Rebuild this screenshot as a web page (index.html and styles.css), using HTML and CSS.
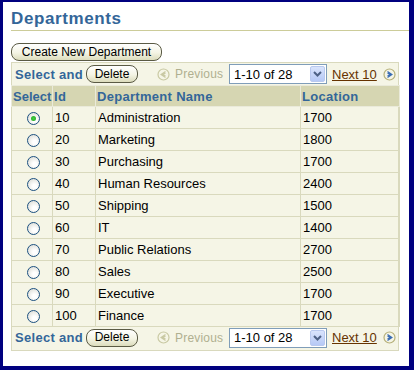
FILE: index.html
```html
<!DOCTYPE html>
<html lang="en">
<head>
  <meta charset="UTF-8" />
  <title>Departments</title>
  <link rel="stylesheet" href="styles.css">
</head>
<body>
  <div class="frame">
    <h1 class="page-title">Departments</h1>
    <div class="title-rule"></div>

    <button class="pill-btn create-btn">Create New Department</button>

    <div class="table-box">
      <div class="toolbar">
        <span class="select-label">Select and</span>
        <button class="pill-btn">Delete</button>
        <span class="nav-prev">
          <svg class="nav-icon" width="13" height="13" viewBox="0 0 13 13">
            <circle cx="6.5" cy="6.5" r="5.5" fill="none" stroke="#c9c9a3" stroke-width="1.2"/>
            <path d="M8.5 3.5 L4 6.5 L8.5 9.5 M8.5 5 L6 6.5 L8.5 8" fill="none" stroke="#c9c9a3" stroke-width="1.1"/>
          </svg>
          <span class="prev-text">Previous</span>
        </span>
        <div class="range-select">
          <span class="range-text">1-10 of 28</span>
          <span class="range-arrow">
            <svg width="9" height="6" viewBox="0 0 9 6"><path d="M1 1 L4.5 4.5 L8 1" fill="none" stroke="#4d6185" stroke-width="2"/></svg>
          </span>
        </div>
        <a class="nav-next" href="#">Next 10</a>
        <svg class="nav-icon" width="13" height="13" viewBox="0 0 13 13">
          <circle cx="6.5" cy="6.5" r="5.5" fill="none" stroke="#b6b07a" stroke-width="1.2"/>
          <path d="M4.5 3.5 L9 6.5 L4.5 9.5 M4.5 5 L7 6.5 L4.5 8" fill="none" stroke="#3b6db3" stroke-width="1.1"/>
        </svg>
      </div>

      <table class="dept-table">
        <thead>
          <tr>
            <th class="col-select">Select</th>
            <th class="col-id">Id</th>
            <th class="col-name">Department Name</th>
            <th class="col-loc">Location</th>
          </tr>
        </thead>
        <tbody>
          <tr><td class="col-select"><span class="radio checked"></span></td><td>10</td><td>Administration</td><td>1700</td></tr>
          <tr><td class="col-select"><span class="radio"></span></td><td>20</td><td>Marketing</td><td>1800</td></tr>
          <tr><td class="col-select"><span class="radio"></span></td><td>30</td><td>Purchasing</td><td>1700</td></tr>
          <tr><td class="col-select"><span class="radio"></span></td><td>40</td><td>Human Resources</td><td>2400</td></tr>
          <tr><td class="col-select"><span class="radio"></span></td><td>50</td><td>Shipping</td><td>1500</td></tr>
          <tr><td class="col-select"><span class="radio"></span></td><td>60</td><td>IT</td><td>1400</td></tr>
          <tr><td class="col-select"><span class="radio"></span></td><td>70</td><td>Public Relations</td><td>2700</td></tr>
          <tr><td class="col-select"><span class="radio"></span></td><td>80</td><td>Sales</td><td>2500</td></tr>
          <tr><td class="col-select"><span class="radio"></span></td><td>90</td><td>Executive</td><td>1700</td></tr>
          <tr><td class="col-select"><span class="radio"></span></td><td>100</td><td>Finance</td><td>1700</td></tr>
        </tbody>
      </table>

      <div class="toolbar toolbar-bottom">
        <span class="select-label">Select and</span>
        <button class="pill-btn">Delete</button>
        <span class="nav-prev">
          <svg class="nav-icon" width="13" height="13" viewBox="0 0 13 13">
            <circle cx="6.5" cy="6.5" r="5.5" fill="none" stroke="#c9c9a3" stroke-width="1.2"/>
            <path d="M8.5 3.5 L4 6.5 L8.5 9.5 M8.5 5 L6 6.5 L8.5 8" fill="none" stroke="#c9c9a3" stroke-width="1.1"/>
          </svg>
          <span class="prev-text">Previous</span>
        </span>
        <div class="range-select">
          <span class="range-text">1-10 of 28</span>
          <span class="range-arrow">
            <svg width="9" height="6" viewBox="0 0 9 6"><path d="M1 1 L4.5 4.5 L8 1" fill="none" stroke="#4d6185" stroke-width="2"/></svg>
          </span>
        </div>
        <a class="nav-next" href="#">Next 10</a>
        <svg class="nav-icon" width="13" height="13" viewBox="0 0 13 13">
          <circle cx="6.5" cy="6.5" r="5.5" fill="none" stroke="#b6b07a" stroke-width="1.2"/>
          <path d="M4.5 3.5 L9 6.5 L4.5 9.5 M4.5 5 L7 6.5 L4.5 8" fill="none" stroke="#3b6db3" stroke-width="1.1"/>
        </svg>
      </div>
    </div>
  </div>
</body>
</html>
```

FILE: styles.css
```css
:root {
  --navy: #00007f;
  --blue: #336699;
  --olive-bg: #f5f5e6;
  --olive-head: #d6d6b2;
  --olive-line: #d9d9bd;
  --brown: #663300;
}

* {
  box-sizing: border-box;
}

body {
  margin: 0;
  font-family: "Liberation Sans", Arial, sans-serif;
  font-size: 13px;
  color: #000;
  background: #fff;
}

.frame {
  width: 414px;
  height: 370px;
  border-style: solid;
  border-color: var(--navy);
  border-width: 2px 5px 4px 3px;
  padding: 7px 0 0 8px;
  background: #fff;
}

.page-title {
  margin: 0;
  font-size: 17px;
  font-weight: bold;
  letter-spacing: 0.6px;
  color: var(--blue);
  line-height: 20px;
}

.title-rule {
  height: 1px;
  background: #cccc99;
  margin: 1px 0 12px;
}

.pill-btn {
  font-family: "Liberation Sans", Arial, sans-serif;
  font-size: 12px;
  color: #000;
  height: 18px;
  padding: 0 7px;
  border: 1px solid #5a5a44;
  border-radius: 8px;
  background: linear-gradient(#ffffff, #f4f4e4 55%, #dcdcbc);
  line-height: 15px;
  cursor: pointer;
}

.create-btn {
  display: block;
  width: 151px;
  margin-bottom: 1px;
}

.table-box {
  width: 388px;
  border: 1px solid var(--olive-line);
  background: var(--olive-bg);
}

.toolbar {
  display: flex;
  align-items: center;
  height: 22px;
  padding-left: 3px;
  white-space: nowrap;
}

.toolbar > * {
  flex-shrink: 0;
}

.toolbar-bottom {
  height: 23px;
  padding-bottom: 2px;
}

.select-label {
  width: 71px;
  font-weight: bold;
  color: var(--blue);
  font-size: 13px;
  letter-spacing: 0.3px;
}

.toolbar .pill-btn {
  width: 52px;
  padding: 0;
}

.nav-prev {
  display: flex;
  align-items: center;
  gap: 5px;
  color: #b0b090;
  margin-left: 19px;
}

.prev-text {
  width: 48px;
  font-size: 12px;
  letter-spacing: 0.2px;
}

.range-select {
  display: flex;
  align-items: center;
  justify-content: space-between;
  width: 98px;
  height: 20px;
  margin-left: 6px;
  border: 1px solid #7f9db9;
  background: #fff;
  padding: 0 1px 0 4px;
}

.range-text {
  font-size: 13px;
}

.range-arrow {
  display: flex;
  align-items: center;
  justify-content: center;
  width: 15px;
  height: 16px;
  border: 1px solid #b9c9ef;
  border-radius: 2px;
  background: linear-gradient(#d9e4fc, #b6c9f6);
}

.nav-next {
  width: 45px;
  color: var(--brown);
  margin-left: 5px;
  margin-right: 6px;
}

.nav-icon {
  display: block;
}

.dept-table {
  width: 388px;
  border-collapse: collapse;
  table-layout: fixed;
  margin-left: -1px;
}

.dept-table th,
.dept-table td {
  height: 22px;
  padding: 0 0 0 2px;
  text-align: left;
  border: 1px solid var(--olive-line);
}

.dept-table th {
  height: 21px;
  padding-left: 1px;
  background: var(--olive-head);
  color: var(--blue);
  font-weight: bold;
  letter-spacing: 0.3px;
  border-color: #eaeada;
}

th.col-select {
  letter-spacing: 0;
}

.col-select {
  width: 41px;
}

.col-id {
  width: 43px;
}

.col-name {
  width: 205px;
}

.col-loc {
  width: 99px;
}

td.col-select {
  text-align: center;
  padding: 0;
}

.radio {
  display: inline-block;
  width: 13px;
  height: 13px;
  border-radius: 50%;
  border: 1px solid #1c5180;
  background: radial-gradient(circle at 60% 65%, #ffffff 20%, #d6d6ce 100%);
  vertical-align: middle;
  position: relative;
  left: 1px;
}

.radio.checked::after {
  content: "";
  position: absolute;
  left: 3px;
  top: 3px;
  width: 5px;
  height: 5px;
  border-radius: 50%;
  background: radial-gradient(circle, #42d042, #21a121);
}
```
